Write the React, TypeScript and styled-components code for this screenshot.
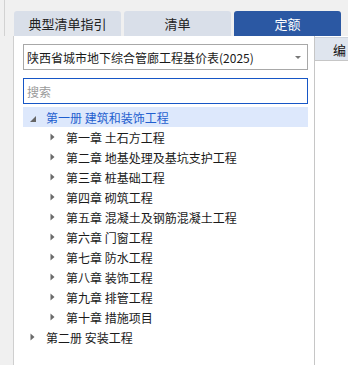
import React from "react";
import styled, { createGlobalStyle } from "styled-components";

const GlobalStyle = createGlobalStyle`
  html, body {
    margin: 0;
    padding: 0;
    background: #f0f0f0;
    font-family: "Noto Sans CJK SC", "Noto Sans", sans-serif;
    font-size: 12px;
    color: #1a1a1a;
  }
  * {
    box-sizing: border-box;
  }
`;

const Frame = styled.div`
  width: 348px;
  height: 365px;
  display: flex;
  flex-direction: column;
  overflow: hidden;
`;

const TabBar = styled.div`
  display: flex;
  gap: 3px;
  height: 36px;
  margin-left: 4px;
  padding: 11px 0 0 9px;
  border-left: 1px solid #d2d2d2;
`;

const Tab = styled.div<{ $active?: boolean }>`
  width: 107px;
  height: 25px;
  border-radius: 3px 3px 0 0;
  display: flex;
  align-items: center;
  justify-content: center;
  font-size: 13px;
  background: ${(p) => (p.$active ? "#2b58a3" : "#d9dfe9")};
  color: ${(p) => (p.$active ? "#ffffff" : "#222222")};
`;

const Body = styled.div`
  flex: 1;
  display: flex;
  min-height: 0;
`;

const LeftPane = styled.div`
  margin-left: 13px;
  width: 302px;
  background: #ffffff;
  border-left: 1px solid #cfcfcf;
  border-right: 1px solid #c6c6c6;
  padding: 8px 6px 0 9px;
  display: flex;
  flex-direction: column;
`;

const Select = styled.div`
  height: 26px;
  border: 1px solid #a8a8a8;
  display: flex;
  align-items: center;
  justify-content: space-between;
  padding: 0 6px 0 3px;
  white-space: nowrap;
`;

const Caret = styled.span`
  width: 0;
  height: 0;
  border-left: 3px solid transparent;
  border-right: 3px solid transparent;
  border-top: 3px solid #777777;
`;

const Search = styled.div`
  height: 26px;
  margin-top: 8px;
  border: 1px solid #1656c6;
  display: flex;
  align-items: center;
  padding-left: 3px;
  color: #9a9a9a;
`;

const Tree = styled.div`
  margin-top: 3px;
  display: flex;
  flex-direction: column;
`;

const Row = styled.div<{ $level: number; $selected?: boolean }>`
  height: 20px;
  display: flex;
  align-items: center;
  padding-left: ${(p) => 7 + p.$level * 20}px;
  background: ${(p) => (p.$selected ? "#dde8fc" : "transparent")};
  color: ${(p) => (p.$selected ? "#1f5fcf" : "#1a1a1a")};
  white-space: nowrap;
`;

const Arrow = styled.span`
  width: 16px;
  height: 20px;
  display: flex;
  align-items: center;
  flex-shrink: 0;
`;

const RightPane = styled.div`
  flex: 1;
  background: #ffffff;
  display: flex;
  flex-direction: column;
`;

const ColumnHead = styled.div`
  height: 24px;
  margin-top: 1px;
  background: #dfe5ee;
  border-top: 1px solid #cdd3dc;
  border-bottom: 1px solid #c6c6c6;
  display: flex;
  align-items: center;
  padding-left: 18px;
  white-space: nowrap;
  font-size: 13px;
  color: #111111;
`;

const Collapsed = () => (
  <svg width="5" height="8" viewBox="0 0 5 8">
    <path d="M0.5 0.5 L4.5 4 L0.5 7.5 Z" fill="#6a6a6a" />
  </svg>
);

const Expanded = () => (
  <svg width="6" height="6" viewBox="0 0 6 6" style={{ marginTop: 4 }}>
    <path d="M6 0 L6 6 L0 6 Z" fill="#666666" />
  </svg>
);

const chapters = [
  "第一章 土石方工程",
  "第二章 地基处理及基坑支护工程",
  "第三章 桩基础工程",
  "第四章 砌筑工程",
  "第五章 混凝土及钢筋混凝土工程",
  "第六章 门窗工程",
  "第七章 防水工程",
  "第八章 装饰工程",
  "第九章 排管工程",
  "第十章 措施项目",
];

export default function App() {
  return (
    <>
      <GlobalStyle />
      <Frame>
        <TabBar>
          <Tab>典型清单指引</Tab>
          <Tab>清单</Tab>
          <Tab $active>定额</Tab>
        </TabBar>
        <Body>
          <LeftPane>
            <Select>
              <span>陕西省城市地下综合管廊工程基价表(2025)</span>
              <Caret />
            </Select>
            <Search>搜索</Search>
            <Tree>
              <Row $level={0} $selected>
                <Arrow>
                  <Expanded />
                </Arrow>
                第一册 建筑和装饰工程
              </Row>
              {chapters.map((c) => (
                <Row $level={1} key={c}>
                  <Arrow>
                    <Collapsed />
                  </Arrow>
                  {c}
                </Row>
              ))}
              <Row $level={0}>
                <Arrow>
                  <Collapsed />
                </Arrow>
                第二册 安装工程
              </Row>
            </Tree>
          </LeftPane>
          <RightPane>
            <ColumnHead>编</ColumnHead>
          </RightPane>
        </Body>
      </Frame>
    </>
  );
}
